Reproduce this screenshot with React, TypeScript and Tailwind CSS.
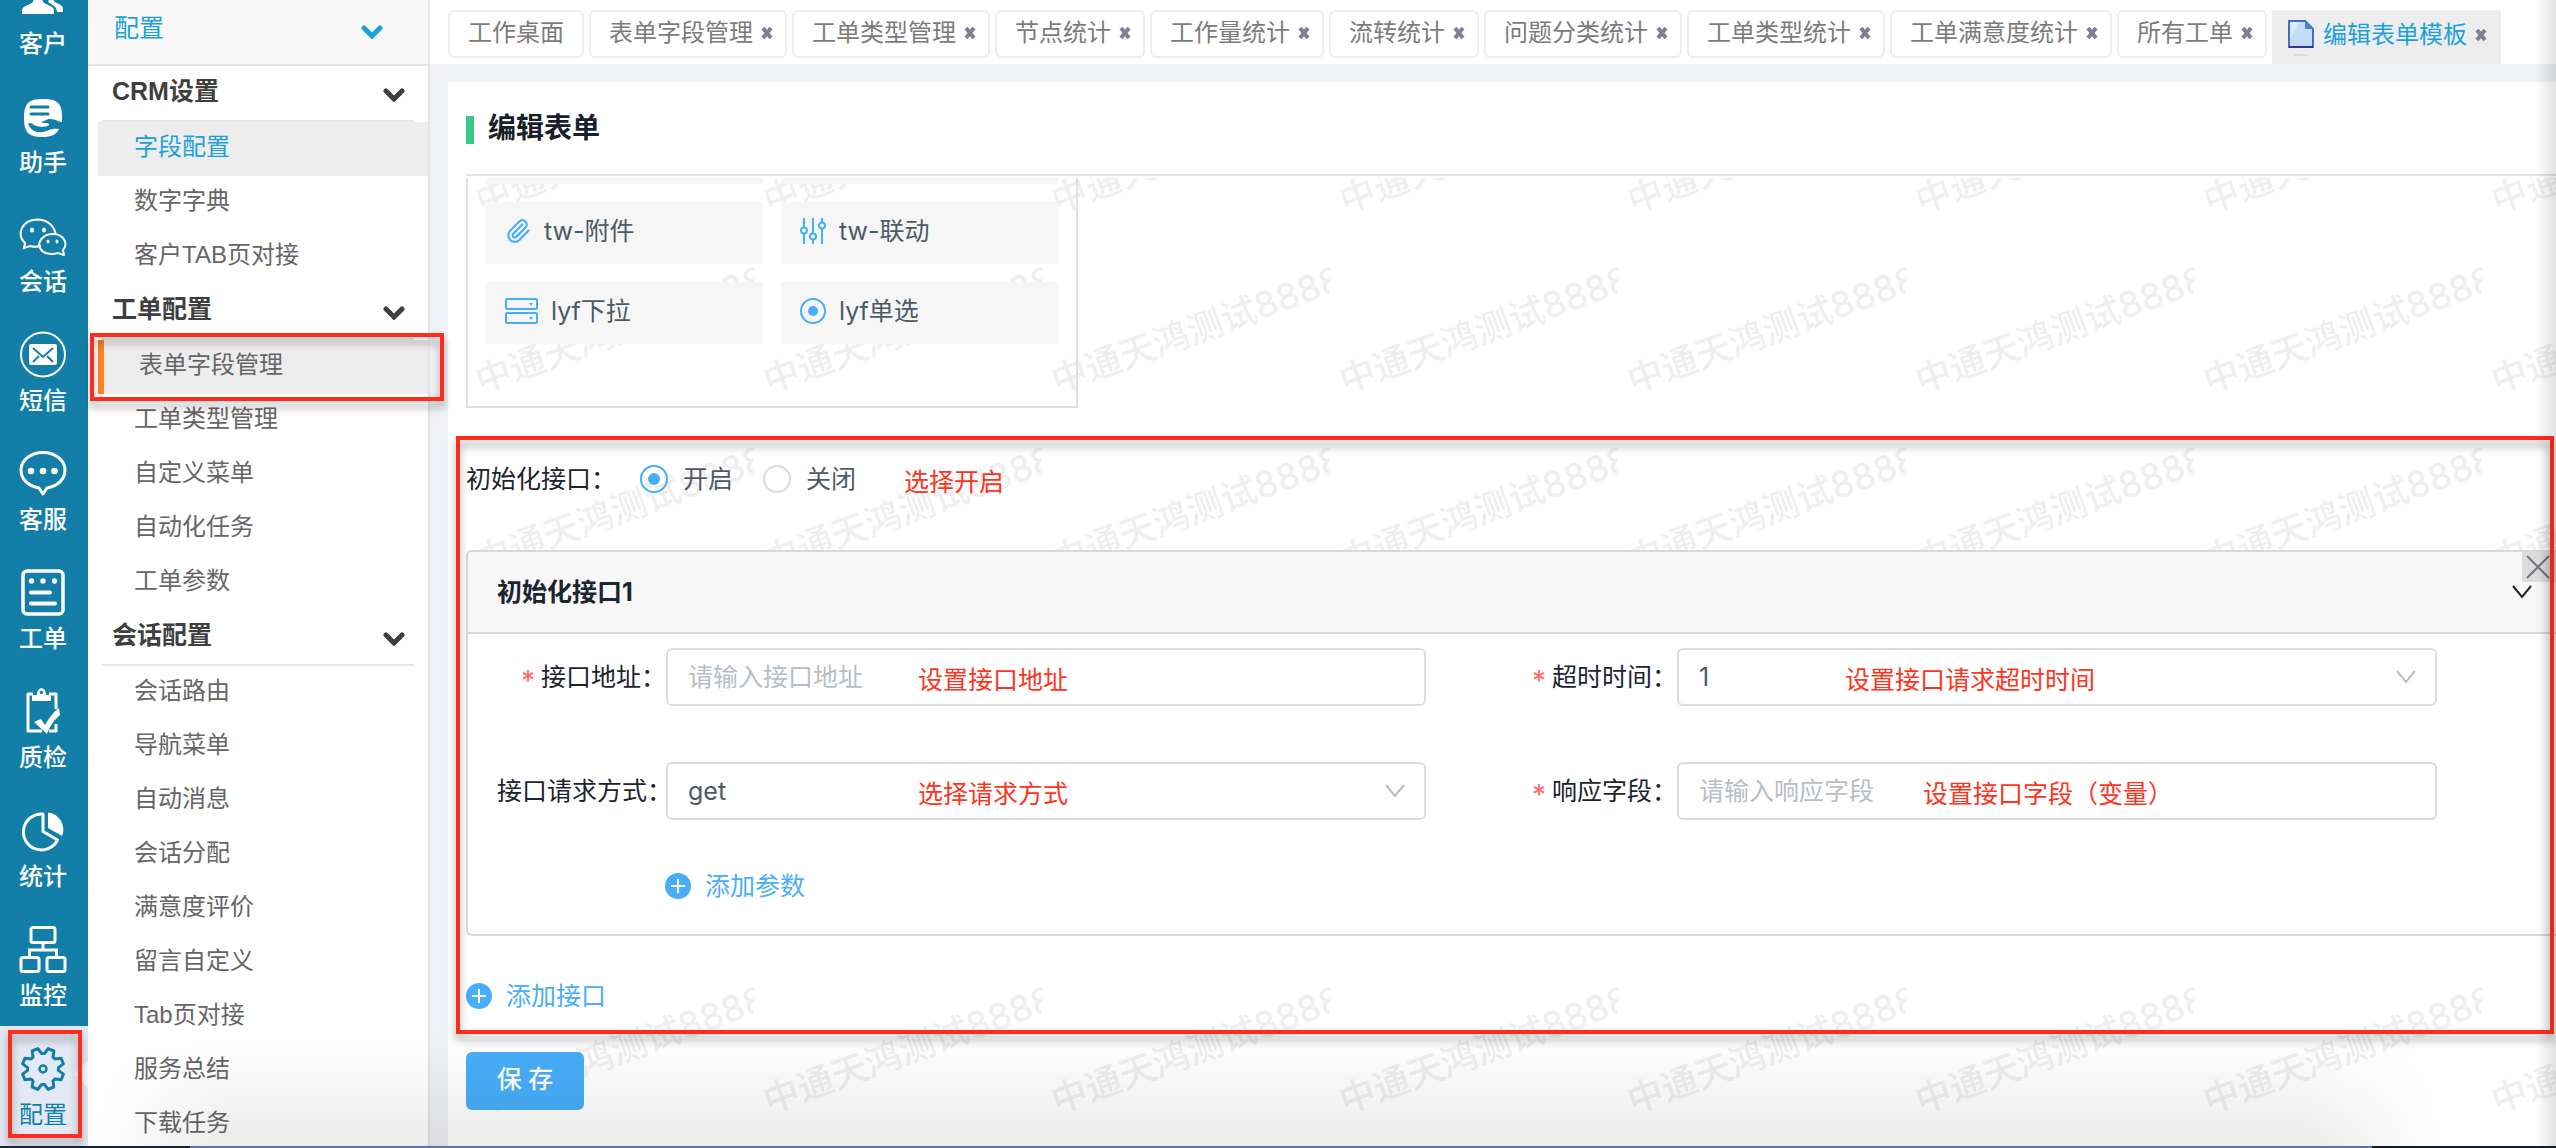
import { useState, type ReactNode } from "react";
import { Paperclip } from "lucide-react";

const RAIL = "#137fa8";

// eight-tooth cog outline centred on (24, 24)
const gearPath = (() => {
  const pts: string[] = [];
  for (let i = 0; i < 8; i++) {
    const steps: [number, number][] = [
      [-5, 15.5],
      [5, 15.5],
      [14, 21],
      [31, 21],
    ];
    steps.forEach(([deg, r]) => {
      const a = ((i * 45 + deg) * Math.PI) / 180;
      pts.push(`${(24 + r * Math.sin(a)).toFixed(1)} ${(24 - r * Math.cos(a)).toFixed(1)}`);
    });
  }
  return `M${pts.join("L")}Z`;
})();

interface RailItem {
  label: string;
  icon: ReactNode;
  active?: boolean;
}

const railItems: RailItem[] = [
  {
    label: "客户",
    icon: (
      <>
        <path
          d="M3 40v-4c0-4 8-5 11-8 1-2 0-4-2-7-3-6-1-15 7-15s10 9 7 15c-2 3-3 5-2 7 3 3 11 4 11 8v4z"
          fill="currentColor"
        />
        <path
          d="M29 7c7-2 11 4 9 11-1 4-4 6-3 9 2 3 9 3 9 8v3h-6c0-6-5-7-9-10 2-4 5-12 0-21z"
          fill="currentColor"
        />
      </>
    ),
  },
  {
    label: "助手",
    icon: (
      <>
        <path
          d="M24 6c14 0 19 4 19 17v6c-4 0-5-3-12-3-4 0-4 2-9 3 3 2 6 0 8 2 1 3-10 4-15 1-2-2-5-3-6-1 3 6 7 9 15 8 6-1 8-4 16-3-3 6-8 8-16 8C10 44 5 40 5 25S10 6 24 6z"
          fill="currentColor"
        />
        <path d="M12 14h17M12 21h17" stroke={RAIL} strokeWidth="3" strokeLinecap="round" />
      </>
    ),
  },
  {
    label: "会话",
    icon: (
      <>
        <path
          d="M22 34c-4 1-8 1-11 0l-6 2 1-5C-3 22 3 8 18 7.500c10 0 17 6 18.500 14"
          fill="none"
          stroke="currentColor"
          strokeWidth="2"
        />
        <path
          d="M44 38c6-7 0-16-10-16s-16 8-13 14c3 6 11 7 18 5l6 2z"
          fill="none"
          stroke="currentColor"
          strokeWidth="2"
          strokeLinejoin="round"
        />
        <g fill="currentColor">
          <ellipse cx="13" cy="18" rx="2" ry="2.500" />
          <ellipse cx="25" cy="18" rx="2" ry="2.500" />
          <ellipse cx="29" cy="29.500" rx="1.500" ry="2" />
          <ellipse cx="38" cy="29.500" rx="1.500" ry="2" />
        </g>
      </>
    ),
  },
  {
    label: "短信",
    icon: (
      <>
        <circle cx="24" cy="23.500" r="22" fill="none" stroke="currentColor" strokeWidth="2" />
        <rect x="10" y="13" width="28" height="21" rx="2" fill="currentColor" />
        <path d="M14 17l10 9 10-9M14 31l6-6M34 31l-6-6" fill="none" stroke={RAIL} strokeWidth="2" />
      </>
    ),
  },
  {
    label: "客服",
    icon: (
      <>
        <path
          d="M20 38C9 36 2 29 2 20 2 10 12 2.500 24 2.500S46 10 46 20c0 9-7 16-18 18l-4 6z"
          fill="none"
          stroke="currentColor"
          strokeWidth="3"
          strokeLinejoin="round"
        />
        <g fill="currentColor">
          <circle cx="12" cy="21" r="3.300" />
          <circle cx="24" cy="21" r="3.300" />
          <circle cx="35.500" cy="21" r="3.300" />
        </g>
      </>
    ),
  },
  {
    label: "工单",
    icon: (
      <>
        <rect x="4" y="2" width="40" height="43" rx="4" fill="none" stroke="currentColor" strokeWidth="3.500" />
        <g fill="currentColor">
          <circle cx="12.500" cy="12" r="2.700" />
          <circle cx="24" cy="12" r="2.700" />
          <circle cx="35.500" cy="12" r="2.700" />
        </g>
        <path d="M12 23.500h19M12 34.500h24" stroke="currentColor" strokeWidth="4" strokeLinecap="round" />
      </>
    ),
  },
  {
    label: "质检",
    icon: (
      <>
        <path
          d="M14 6H9v37h14M30 6h7v15M37 36v7h-7"
          fill="none"
          stroke="currentColor"
          strokeWidth="3"
          strokeLinejoin="round"
        />
        <path d="M13 13V7h5c0-9 9-9 9 0h5v6z" fill="currentColor" />
        <circle cx="22.500" cy="4.500" r="1.700" fill={RAIL} />
        <path d="M15 34l7-3 4 6c4-7 8-13 14-17l1 7c-6 5-10 11-13 19z" fill="currentColor" />
      </>
    ),
  },
  {
    label: "统计",
    icon: (
      <>
        <path
          d="M24 7A18 18 0 1 0 38.500 33L24 24.500z"
          fill="none"
          stroke="currentColor"
          strokeWidth="3"
          strokeLinejoin="round"
        />
        <path d="M29 5.500A17 17 0 0 1 43 29l-14-8z" fill="currentColor" />
      </>
    ),
  },
  {
    label: "监控",
    icon: (
      <g fill="none" stroke="currentColor" strokeWidth="3">
        <rect x="12" y="1.500" width="24" height="15" rx="2" />
        <rect x="2" y="31.500" width="18" height="14" rx="2" />
        <rect x="28" y="31.500" width="18" height="14" rx="2" />
        <path d="M24 17v7M10.500 31v-7h27v7" />
      </g>
    ),
  },
  {
    label: "配置",
    active: true,
    icon: (
      <>
        <path d={gearPath} fill="none" stroke="currentColor" strokeWidth="3" strokeLinejoin="round" />
        <circle cx="24" cy="24" r="3.500" fill="none" stroke="currentColor" strokeWidth="2.500" />
      </>
    ),
  },
];

const menuGroups = [
  { title: "CRM设置", items: ["字段配置", "数字字典", "客户TAB页对接"] },
  { title: "工单配置", items: ["表单字段管理", "工单类型管理", "自定义菜单", "自动化任务", "工单参数"] },
  {
    title: "会话配置",
    items: [
      "会话路由",
      "导航菜单",
      "自动消息",
      "会话分配",
      "满意度评价",
      "留言自定义",
      "Tab页对接",
      "服务总结",
      "下载任务",
    ],
  },
];

const tabs = [
  "工作桌面",
  "表单字段管理",
  "工单类型管理",
  "节点统计",
  "工作量统计",
  "流转统计",
  "问题分类统计",
  "工单类型统计",
  "工单满意度统计",
  "所有工单",
];

function Highlight({ className }: { className: string }) {
  return (
    <div
      aria-hidden="true"
      className={`pointer-events-none absolute border-4 border-[#ff2c1c] drop-shadow-[0_6px_4px_rgba(0,0,0,0.35)] ${className}`}
    />
  );
}

function MenuChevron() {
  return (
    <svg width="22" height="14" viewBox="0 0 22 14" aria-hidden="true">
      <path
        d="M3 3l8 8 8-8"
        fill="none"
        stroke="currentColor"
        strokeWidth="5"
        strokeLinecap="round"
      />
    </svg>
  );
}

function ThinChevron({ className }: { className: string }) {
  return (
    <svg width="20" height="14" viewBox="0 0 20 14" className={className} aria-hidden="true">
      <path d="M1 1l9 11 9-11" fill="none" stroke="currentColor" strokeWidth="2" />
    </svg>
  );
}

function CloseMark() {
  return (
    <button type="button" aria-label="关闭标签" className="text-[#7b8095]">
      <svg width="12" height="12" viewBox="0 0 12 12" className="block">
        <path d="M2 1l8 10M10 1L2 11" stroke="currentColor" strokeWidth="4" />
      </svg>
    </button>
  );
}

function Rail() {
  return (
    <nav className="relative z-10 flex w-[88px] shrink-0 flex-col justify-end bg-[#137fa8]">
      {railItems.map((item) => (
        <a
          key={item.label}
          href="#"
          className={`relative flex shrink-0 flex-col items-center gap-[10px] pt-[19px] pr-[2px] text-2xl leading-6 ${
            item.active ? "h-[120px] bg-[#e2e9f4] text-[#137fa8]" : "h-[119px] font-medium text-white"
          }`}
        >
          <svg width="48" height="48" viewBox="0 0 48 48" aria-hidden="true">
            {item.icon}
          </svg>
          {item.label}
          {item.active && (
            <>
              <svg
                width="14"
                height="28"
                viewBox="0 0 14 28"
                className="absolute top-[34px] right-0"
                aria-hidden="true"
              >
                <path d="M14 0v28L0 14z" fill="#fafbfd" />
              </svg>
              <Highlight className="top-1 right-[6px] bottom-2 left-2" />
            </>
          )}
        </a>
      ))}
    </nav>
  );
}

function SideMenu() {
  return (
    <aside className="relative z-10 w-[342px] shrink-0 border-r-2 border-[#e4e5e8] bg-white">
      <button
        type="button"
        className="flex h-[66px] w-full items-center justify-between border-b-2 border-[#e2e2e2] bg-[#f8f8f8] pr-[45px] pb-2 pl-[26px] text-[25px] leading-8 text-[#1ba2dc]"
      >
        配置
        <span className="pt-2">
          <MenuChevron />
        </span>
      </button>
      {menuGroups.map((group) => (
        <div key={group.title}>
          <div className="pr-[14px] pl-[14px]">
            <button
              type="button"
              className="flex h-14 w-full items-center justify-between border-b-2 border-[#e6e6e6] pr-[9px] pb-1 pl-[10px] text-[25px] leading-8 font-bold text-[#3f3f3f]"
            >
              {group.title}
              <span className="pt-2">
                <MenuChevron />
              </span>
            </button>
          </div>
          <ul className="pl-[10px] text-2xl leading-8 text-[#666]">
            {group.items.map((item) => (
              <li key={item}>
                {item === "表单字段管理" ? (
                  <a
                    href="#"
                    className="relative flex h-[54px] items-center border-l-[6px] border-[#ff8420] bg-[#ededed] pb-1 pl-[35px]"
                  >
                    {item}
                    <Highlight className="-inset-y-[7px] -left-[14px] -right-4" />
                  </a>
                ) : (
                  <a
                    href="#"
                    className={`flex h-[54px] items-center pb-1 pl-9 ${
                      item === "字段配置" ? "bg-[#ededed] text-[#1ba2dc]" : ""
                    }`}
                  >
                    {item}
                  </a>
                )}
              </li>
            ))}
          </ul>
        </div>
      ))}
    </aside>
  );
}

function TabBar() {
  return (
    <div className="flex h-16 shrink-0 items-start gap-[5px] bg-white pt-[10px] pl-[18px] text-2xl leading-8 whitespace-nowrap text-[#7c7c7c]">
      {tabs.map((tab, index) => (
        <div
          key={tab}
          className={`flex h-12 shrink-0 items-center gap-2 rounded-md border-2 border-[#eee] pb-[2px] pl-[18px] ${
            index === 0 ? "pr-[18px]" : "pr-3"
          }`}
        >
          <a href="#">{tab}</a>
          {index > 0 && <CloseMark />}
        </div>
      ))}
      <div className="flex h-[54px] shrink-0 items-center bg-[#ededed] pr-[14px] pb-1 pl-4 text-[#1ba2dc]">
        <svg width="26" height="38" viewBox="0 0 26 38" className="mt-[6px] mr-[9px]" aria-hidden="true">
          <path d="M1 2h16l8 8v18H1z" fill="#c3dbf5" stroke="#4470bb" strokeWidth="2" />
          <path d="M2 3h10L2 20z" fill="#dcebfb" />
          <path d="M17 2v8h8z" fill="#4f83cf" />
          <path d="M1 28h24" stroke="#35368c" strokeWidth="2" />
          <path d="M6 36h14" stroke="#c8c8c8" />
        </svg>
        <a href="#" className="mr-2">
          编辑表单模板
        </a>
        <CloseMark />
      </div>
    </div>
  );
}

function Watermark() {
  return (
    <svg className="absolute inset-0 h-full w-full" aria-hidden="true">
      <defs>
        <pattern id="wm" width="288" height="180" patternUnits="userSpaceOnUse" y="88">
          <text x="15" y="128" fontSize="36" fontWeight="500" fill="#efefef" transform="rotate(-20 15 128)">
            中通天鸿测试8888
          </text>
        </pattern>
      </defs>
      <rect width="100%" height="100%" fill="url(#wm)" />
    </svg>
  );
}

const widgets = [
  {
    label: "tw-附件",
    icon: <Paperclip size={26} strokeWidth={2} />,
  },
  {
    label: "tw-联动",
    icon: (
      <svg width="26" height="26" viewBox="0 0 26 26" fill="none" stroke="currentColor" strokeWidth="2">
        <path d="M4 0v9M4 16v10M13 0v15M13 22v4M22 0v4M22 11v15" />
        <circle cx="4" cy="12.500" r="3" />
        <circle cx="13" cy="18.500" r="3" />
        <circle cx="22" cy="7.500" r="3" />
      </svg>
    ),
  },
  {
    label: "lyf下拉",
    icon: (
      <svg width="33" height="26" viewBox="0 0 33 26" fill="none" stroke="currentColor" strokeWidth="2">
        <rect x="1" y="1" width="31" height="10" rx="1" />
        <rect x="1" y="15" width="31" height="10" rx="1" />
        <path d="M24 5h4l-2 3zM24 19h4l-2 3z" fill="currentColor" stroke="none" />
      </svg>
    ),
  },
  {
    label: "lyf单选",
    icon: (
      <svg width="26" height="26" viewBox="0 0 26 26">
        <circle cx="13" cy="13" r="12" fill="none" stroke="currentColor" strokeWidth="2" />
        <circle cx="13" cy="13" r="5" fill="currentColor" />
      </svg>
    ),
  },
];

function WidgetPanel() {
  return (
    <div className="relative grid w-[612px] grid-cols-2 gap-[18px] border-2 border-t-0 border-[#dbe1e4] px-[18px] pb-[62px]">
      <div className="h-[6px] bg-[#f6f6f6]" />
      <div className="h-[6px] bg-[#f6f6f6]" />
      {widgets.map((w) => (
        <button
          key={w.label}
          type="button"
          className="flex h-[62px] items-center gap-[13px] bg-[#f6f6f6] pb-1 pl-[19px] text-[#4d5b69]"
        >
          <span className="text-[#48aefa]">{w.icon}</span>
          {w.label}
        </button>
      ))}
    </div>
  );
}

function Note({ className, children }: { className: string; children: ReactNode }) {
  return (
    <span className={`pointer-events-none leading-8 whitespace-nowrap text-[#ff3420] ${className}`}>
      {children}
    </span>
  );
}

interface FieldProps {
  id: string;
  label: string;
  required?: boolean;
  children: ReactNode;
}

function Field({ id, label, required, children }: FieldProps) {
  return (
    <div className="flex items-center pr-[53px]">
      <label
        htmlFor={id}
        className={`flex w-[198px] shrink-0 items-center gap-[6px] whitespace-nowrap ${
          required ? "justify-end" : "pl-[29px]"
        }`}
      >
        {required && <span className="pt-2 text-[28px] text-[#ff6b6b]">*</span>}
        {label}：
      </label>
      <div className="relative flex-1">{children}</div>
    </div>
  );
}

const controlClass =
  "block h-[58px] w-full appearance-none rounded-md border-2 border-[#d7dde2] bg-white px-5 text-[#4d5b69] placeholder:text-[#b7bec5]";

function AddLink({ children, className }: { children: ReactNode; className: string }) {
  return (
    <button type="button" className={`flex items-center gap-[14px] text-[#48aefa] ${className}`}>
      <svg width="26" height="26" viewBox="0 0 26 26" aria-hidden="true">
        <circle cx="13" cy="13" r="13" fill="currentColor" />
        <path d="M13 6v14M6 13h14" stroke="#fff" strokeWidth="2" />
      </svg>
      {children}
    </button>
  );
}

function InitSection() {
  const [enabled, setEnabled] = useState(true);
  const [open, setOpen] = useState(true);

  return (
    <section className="relative mt-7 pb-[22px] text-[#1c2430]">
      <div className="flex h-[114px] items-start pt-[27px]">
        <span className="w-[174px]">初始化接口：</span>
        {[true, false].map((value) => (
          <label key={String(value)} className="mr-[30px] flex items-center gap-[15px] text-[#4d5b69]">
            <input
              type="radio"
              name="init-api"
              checked={enabled === value}
              onChange={() => setEnabled(value)}
              className="size-7 appearance-none rounded-full border-2 border-[#d7dde2] bg-white bg-clip-content p-[6px] checked:border-[#48aefa] checked:bg-[#48aefa]"
            />
            {value ? "开启" : "关闭"}
          </label>
        ))}
        <Note className="mt-[3px] ml-[18px]">选择开启</Note>
      </div>

      <div className="relative rounded-l-md border-2 border-r-0 border-[#d9d9d9] bg-white">
        <div className="flex h-[82px] items-center justify-between rounded-tl-md border-b-2 border-[#d9d9d9] bg-[#f7f7f7] pr-6 pl-[29px]">
          <h2 className="font-bold">初始化接口1</h2>
          <button type="button" aria-label="展开" onClick={() => setOpen(!open)}>
            <ThinChevron className="block" />
          </button>
        </div>
        <button
          type="button"
          aria-label="删除接口"
          className="absolute top-0 right-0 flex h-[30px] w-[34px] items-center bg-[#dcdcdc] pl-1 text-[#6b7885]"
        >
          <svg width="24" height="24" viewBox="0 0 24 24">
            <path d="M1 1l22 22M23 1L1 23" stroke="currentColor" strokeWidth="2" />
          </svg>
        </button>

        {open && (
          <div className="pt-[14px] pr-[66px] pb-8">
            <div className="grid grid-cols-2 gap-y-14">
              <Field id="api-url" label="接口地址" required>
                <input id="api-url" placeholder="请输入接口地址" className={controlClass} />
                <Note className="absolute top-4 left-[252px]">设置接口地址</Note>
              </Field>
              <Field id="timeout" label="超时时间" required>
                <select id="timeout" defaultValue="1" className={controlClass}>
                  <option>1</option>
                  <option>2</option>
                  <option>3</option>
                </select>
                <ThinChevron className="pointer-events-none absolute top-[22px] right-[21px] text-[#b7bec5]" />
                <Note className="absolute top-4 left-[168px]">设置接口请求超时时间</Note>
              </Field>
              <Field id="method" label="接口请求方式">
                <select id="method" defaultValue="get" className={controlClass}>
                  <option>get</option>
                  <option>post</option>
                </select>
                <ThinChevron className="pointer-events-none absolute top-[22px] right-[21px] text-[#b7bec5]" />
                <Note className="absolute top-4 left-[252px]">选择请求方式</Note>
              </Field>
              <Field id="response" label="响应字段" required>
                <input id="response" placeholder="请输入响应字段" className={controlClass} />
                <Note className="absolute top-4 left-[246px]">设置接口字段（变量）</Note>
              </Field>
            </div>
            <AddLink className="mt-[50px] ml-[197px]">添加参数</AddLink>
          </div>
        )}
      </div>

      <AddLink className="mt-11">添加接口</AddLink>
      <Highlight className="inset-y-0 right-[2px] -left-[10px]" />
    </section>
  );
}

export default function App() {
  return (
    <div className="relative flex h-screen flex-col overflow-hidden bg-[#f0f1f6] font-['Liberation_Sans','Noto_Sans_CJK_SC',sans-serif]">
      <div className="flex min-h-0 flex-1">
        <Rail />
        <SideMenu />
        <main className="flex min-w-0 flex-1 flex-col">
          <TabBar />
          <div className="flex min-h-0 flex-1 flex-col pt-[18px] pl-[18px]">
            <div className="flex min-h-0 flex-1 flex-col bg-white pl-[18px] font-['Inter','Noto_Sans_CJK_SC',sans-serif] text-[25px] leading-8">
              <div className="flex h-[94px] shrink-0 items-center gap-[14px] border-b-2 border-[#dfe4e7]">
                <span className="mt-1 h-7 w-2 bg-[#38c985]" />
                <h1 className="text-[28px] leading-8 font-bold text-[#17202a]">编辑表单</h1>
              </div>
              <div className="relative mt-[2px] flex-1">
                <Watermark />
                <WidgetPanel />
                <InitSection />
                <button
                  type="button"
                  className="relative mt-[18px] h-[58px] w-[118px] rounded-md bg-[#48aefa] pb-1 font-medium text-white"
                >
                  保 存
                </button>
              </div>
            </div>
          </div>
        </main>
      </div>
      {/* window shade along the bottom and right edges */}
      <div
        aria-hidden="true"
        className="pointer-events-none absolute right-[110px] bottom-0 left-[88px] z-20 h-28 bg-linear-to-t from-black/8 to-transparent [mask-image:linear-gradient(to_right,transparent,black_6%,black_94%,transparent)]"
      />
      <div
        aria-hidden="true"
        className="pointer-events-none absolute inset-y-0 right-0 z-20 w-5 bg-linear-to-l from-black/12 to-transparent"
      />
      <div className="relative z-30 flex h-[2px] shrink-0 bg-[#5673a5]">
        <div className="w-[190px] bg-[#1b2438]" />
        <div className="ml-auto w-[184px] bg-[#141b2b]" />
      </div>
    </div>
  );
}
